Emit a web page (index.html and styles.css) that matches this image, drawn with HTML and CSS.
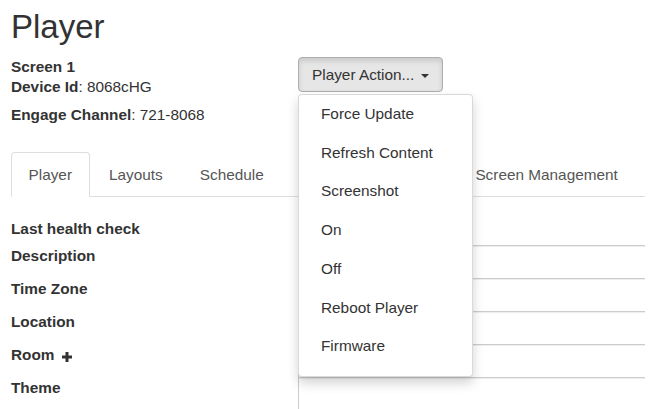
FILE: index.html
```html
<!DOCTYPE html>
<html lang="en">
<head>
    <meta charset="UTF-8">
    <meta name="viewport" content="width=device-width, initial-scale=1.0">
    <title>Player</title>
    <link rel="stylesheet" href="styles.css">
</head>
<body>
    <div class="page">
        <h1 class="title">Player</h1>

        <div class="summary">
            <div class="info">
                <div class="info-line"><b>Screen 1</b></div>
                <div class="info-line"><b>Device Id</b>: 8068cHG</div>
                <div class="info-line channel"><b>Engage Channel</b>: 721-8068</div>
            </div>
            <div class="actions">
                <div class="dropdown">
                    <button class="btn" type="button">Player Action... <span class="caret"></span></button>
                    <ul class="dropdown-menu">
                        <li>Force Update</li>
                        <li>Refresh Content</li>
                        <li>Screenshot</li>
                        <li>On</li>
                        <li>Off</li>
                        <li>Reboot Player</li>
                        <li>Firmware</li>
                    </ul>
                </div>
            </div>
        </div>

        <!-- tabs -->
        <ul class="tabs">
            <li class="active"><a>Player</a></li>
            <li><a>Layouts</a></li>
            <li><a>Schedule</a></li>
            <li><a>Display</a></li>
            <li><a>Groups</a></li>
            <li><a>Screen Management</a></li>
        </ul>

        <div class="tab-body">
            <div class="row row-static">
                <label>Last health check</label>
                <div></div>
            </div>
            <div class="row">
                <label>Description</label>
                <div class="field"></div>
            </div>
            <div class="row">
                <label>Time Zone</label>
                <div class="field"></div>
            </div>
            <div class="row">
                <label>Location</label>
                <div class="field"></div>
            </div>
            <div class="row">
                <label>Room<svg class="plus" width="10" height="10" viewBox="0 0 10 10"><path d="M3.5 0h3v3.5H10v3H6.5V10h-3V6.5H0v-3h3.5z" fill="#333"/></svg></label>
                <div class="field"></div>
            </div>
            <div class="row">
                <label>Theme</label>
                <div class="field"></div>
            </div>
        </div>
    </div>
</body>
</html>
```
FILE: styles.css
```css
body {
    margin: 0;
    font-family: "Liberation Sans", Arial, sans-serif;
    font-size: 15.35px;
    line-height: 21px;
    color: #333;
    background: #fff;
    overflow: hidden;
}

.page {
    padding: 0 10px 0 11px;
}

.title {
    margin: 9px 0 12px;
    font-size: 33px;
    line-height: 36px;
    font-weight: normal;
}

.summary {
    display: grid;
    grid-template-columns: 287px 1fr;
}

.info-line {
    line-height: 20px;
}

.info-line.channel {
    margin-top: 8px;
}

.dropdown {
    position: relative;
    display: inline-block;
}

.btn {
    font: inherit;
    line-height: 21px;
    color: #333;
    background-color: #e6e6e6;
    border: 1px solid #adadad;
    border-radius: 4px;
    padding: 6px 13px;
    box-shadow: inset 0 3px 5px rgba(0, 0, 0, 0.125);
    cursor: pointer;
}

.caret {
    display: inline-block;
    width: 0;
    height: 0;
    margin-left: 2px;
    vertical-align: middle;
    border-top: 4px solid #333;
    border-left: 4px solid transparent;
    border-right: 4px solid transparent;
}

.dropdown-menu {
    position: absolute;
    top: 100%;
    left: 0;
    z-index: 10;
    width: 175px;
    box-sizing: border-box;
    margin: 2px 0 0;
    padding: 0 0 10px;
    list-style: none;
    background: #fff;
    border: 1px solid rgba(0, 0, 0, 0.15);
    border-radius: 4px;
    box-shadow: 0 6px 12px rgba(0, 0, 0, 0.175);
}

.dropdown-menu li {
    padding: 9px 22px;
    line-height: 20.7px;
    color: #333;
    white-space: nowrap;
}

.tabs {
    display: flex;
    margin: 27px 0 0;
    padding: 0;
    list-style: none;
    border-bottom: 1px solid #ddd;
}

.tabs li {
    margin-bottom: -1px;
}

.tabs a {
    display: block;
    margin-right: 2px;
    padding: 11px 16.5px;
    line-height: 21px;
    color: #555;
    border: 1px solid transparent;
    border-radius: 4px 4px 0 0;
}

.tabs .active a {
    background: #fff;
    border-color: #ddd #ddd transparent;
}

.tab-body {
    padding-top: 21px;
}

.row {
    display: grid;
    grid-template-columns: 287px 1fr;
    height: 33px;
}

.row-static {
    height: 27px;
}

.row label {
    font-weight: bold;
}

.plus {
    margin-left: 8px;
    vertical-align: -2px;
}

.field {
    box-sizing: border-box;
    height: 33px;
    border-top: 1px solid #ccc;
    border-left: 1px solid #ccc;
    box-shadow: inset 0 1px 1px rgba(0, 0, 0, 0.075);
}
```
